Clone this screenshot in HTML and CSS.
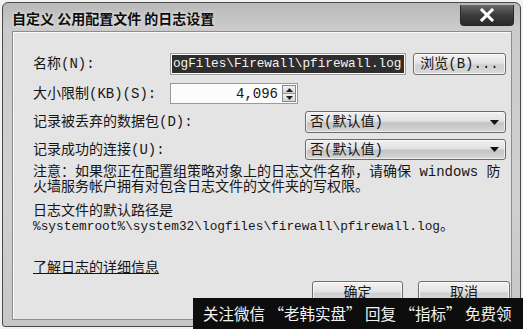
FILE: index.html
```html
<!DOCTYPE html>
<html lang="zh-CN">
<head>
<meta charset="utf-8">
<title>日志设置</title>
<link rel="stylesheet" href="styles.css">
</head>
<body>
<div class="window">
  <div class="titlebar">
    <div class="title">自定义 公用配置文件 的日志设置</div>
    <div class="close">
      <svg width="16" height="14" viewBox="0 0 16 14"><path d="M3 2 L13 12 M13 2 L3 12" stroke="#fff" stroke-width="3" stroke-linecap="square"/></svg>
    </div>
  </div>
  <div class="content">
    <div class="row">
      <div class="label">名称(N):</div>
      <div class="namebox"><div class="sel">ogFiles\Firewall\pfirewall.log</div></div>
      <div class="btn browse">浏览(B)...</div>
    </div>
    <div class="row r2">
      <div class="label">大小限制(KB)(S):</div>
      <div class="sizebox">
        <span class="val">4,096</span>
        <div class="spin">
          <div class="sb"><svg width="7" height="4" viewBox="0 0 7 4"><path d="M0 4 L3.5 0 L7 4Z" fill="#222"/></svg></div>
          <div class="sb"><svg width="7" height="4" viewBox="0 0 7 4"><path d="M0 0 L3.5 4 L7 0Z" fill="#222"/></svg></div>
        </div>
      </div>
    </div>
    <div class="row r3">
      <div class="label wide">记录被丢弃的数据包(D):</div>
      <div class="combo"><span>否(默认值)</span><svg width="9" height="5" viewBox="0 0 9 5"><path d="M0 0 L9 0 L4.5 5Z" fill="#111"/></svg></div>
    </div>
    <div class="row r4">
      <div class="label wide">记录成功的连接(U):</div>
      <div class="combo"><span>否(默认值)</span><svg width="9" height="5" viewBox="0 0 9 5"><path d="M0 0 L9 0 L4.5 5Z" fill="#111"/></svg></div>
    </div>
    <p class="note">注意：如果您正在配置组策略对象上的日志文件名称，请确保 windows 防<br>火墙服务帐户拥有对包含日志文件的文件夹的写权限。</p>
    <p class="path">日志文件的默认路径是<br><span class="mono">%systemroot%\system32\logfiles\firewall\pfirewall.log</span>。</p>
    <a class="link" href="#">了解日志的详细信息</a>
    <div class="buttons">
      <div class="btn ok">确定</div>
      <div class="btn cancel">取消</div>
    </div>
  </div>
</div>
<div class="banner">关注微信 “老韩实盘” 回复 “指标” 免费领</div>
</body>
</html>
```
FILE: styles.css
```css
html, body {
  margin: 0;
  padding: 0;
  width: 523px;
  height: 329px;
  overflow: hidden;
  background: #f2f2f2;
}
body {
  font-family: "Liberation Mono", "Noto Sans CJK SC", monospace;
  font-size: 14px;
  color: #161616;
}
.window {
  margin: 2px;
  height: 323px;
  border: 1px solid #4a4a4a;
  border-radius: 6px 6px 3px 3px;
  background: linear-gradient(180deg, #b8b8b8 0%, #cbcbcb 8%, #d0d0d0 60%, #c6c6c6 100%);
  display: flex;
  flex-direction: column;
}
.titlebar {
  height: 28px;
  display: flex;
  justify-content: space-between;
  align-items: flex-start;
  flex-shrink: 0;
}
.title {
  font-family: "Noto Sans CJK SC", sans-serif;
  font-size: 14px;
  line-height: 16px;
  margin: 7px 0 0 9px;
  color: #0c0c0c;
  font-weight: 700;
  text-shadow: 0 0 4px rgba(255,255,255,0.8);
}
.close {
  width: 54px;
  height: 21px;
  margin: 2px 6px 0 0;
  border: 1px solid #2a2a2a;
  border-top: none;
  border-radius: 0 0 4px 4px;
  background: linear-gradient(180deg, #6a6a6a 0%, #3c3c3c 50%, #2a2a2a 100%);
  display: flex;
  align-items: center;
  justify-content: center;
  box-sizing: border-box;
}
.content {
  flex: 1;
  margin: 0 8px 6px 9px;
  border: 1px solid #8c8c8c;
  box-shadow: inset 1px 1px 0 #fafafa;
  background: #e4e4e4;
  padding: 21px 5px 0 20px;
  position: relative;
}
.row {
  display: flex;
  align-items: center;
  height: 22px;
}
.r2 { margin-top: 8px; height: 21px; }
.r3 { margin-top: 7px; }
.r4 { margin-top: 6px; height: 21px; }
.label {
  width: 137px;
  flex-shrink: 0;
  line-height: 16px;
}
.label.wide { width: 272px; }
.namebox {
  width: 236px;
  height: 22px;
  box-sizing: border-box;
  border: 1px solid #9a9a9a;
  background: #fbfbfb;
  padding: 1px;
}
.sel {
  height: 18px;
  background: #2e2e2e;
  color: #f4f4f4;
  font-size: 12.7px;
  line-height: 18px;
  overflow: hidden;
  white-space: nowrap;
  padding-left: 1px;
}
.btn {
  box-sizing: border-box;
  border: 1px solid #6e6e6e;
  border-radius: 3px;
  background: linear-gradient(180deg, #f2f2f2 0%, #e4e4e4 45%, #cfcfcf 55%, #d9d9d9 100%);
  box-shadow: inset 0 0 0 1px rgba(255,255,255,0.7);
  display: flex;
  align-items: center;
  justify-content: center;
  line-height: 16px;
}
.browse {
  width: 93px;
  height: 22px;
  margin-left: 7px;
}
.sizebox {
  width: 128px;
  height: 21px;
  box-sizing: border-box;
  border: 1px solid #9a9a9a;
  background: #fcfcfc;
  display: flex;
  align-items: center;
  justify-content: flex-end;
  padding-right: 1px;
}
.val {
  font-size: 14px;
  margin-right: 4px;
}
.spin {
  width: 14px;
  height: 17px;
  display: flex;
  flex-direction: column;
  border: 1px solid #888;
  box-sizing: border-box;
}
.sb {
  flex: 1;
  display: flex;
  align-items: center;
  justify-content: center;
  background: linear-gradient(180deg, #f4f4f4, #d4d4d4);
}
.sb + .sb { border-top: 1px solid #999; }
.combo {
  width: 201px;
  height: 22px;
  box-sizing: border-box;
  border: 1px solid #6a6a6a;
  border-radius: 3px;
  background: linear-gradient(180deg, #f0f0f0 0%, #e2e2e2 45%, #c4c4c4 55%, #d6d6d6 100%);
  box-shadow: inset 0 0 0 1px rgba(255,255,255,0.6);
  display: flex;
  align-items: center;
  justify-content: space-between;
  padding: 0 6px 0 4px;
  line-height: 16px;
}
.r4 .combo { height: 21px; }
.note {
  margin: 5px 0 0 0;
  line-height: 14.5px;
}
.path {
  margin: 10px 0 0 0;
  line-height: 15px;
}
.mono { font-size: 12.8px; }
.link {
  display: inline-block;
  margin-top: 24px;
  color: #161616;
  text-decoration: underline;
  line-height: 16px;
  font-family: "Noto Sans CJK SC", sans-serif;
}
.buttons {
  display: flex;
  justify-content: flex-end;
  gap: 15px;
  margin: 5px -4px 0 0;
}
.ok, .cancel {
  width: 91px;
  height: 23px;
}
.cancel { width: 92px; }
.banner {
  position: absolute;
  left: 193px;
  top: 298px;
  right: 0;
  bottom: 0;
  background: #0d0d0d;
  color: #f2f2f2;
  font-family: "Noto Sans CJK SC", sans-serif;
  font-size: 15.5px;
  line-height: 31px;
  padding-left: 10px;
  white-space: nowrap;
  overflow: hidden;
}
```
